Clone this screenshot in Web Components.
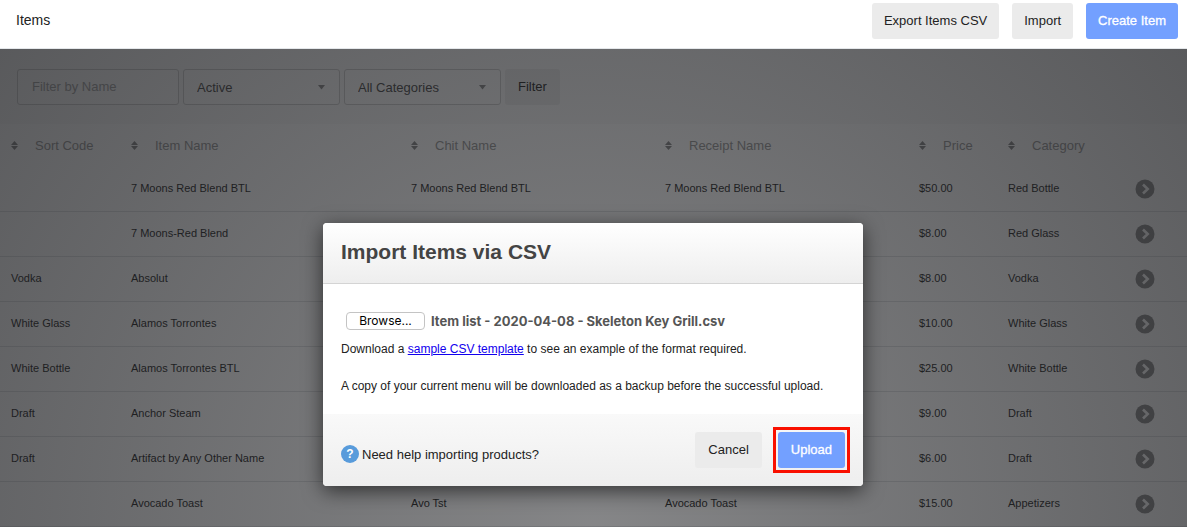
<!DOCTYPE html>
<html lang="en">
<head>
<meta charset="utf-8">
<meta name="viewport" content="width=device-width, initial-scale=1">
<title>Items</title>
<style>
    body {
        margin: 0;
        font-family: "Liberation Sans", Arial, sans-serif;
        font-size: 12px;
        color: #222;
        background: #fff;
    }
</style>
</head>
<body>
<items-page></items-page>

<script>
const ITEMS = [
    ['', '7 Moons Red Blend BTL', '7 Moons Red Blend BTL', '7 Moons Red Blend BTL', '$50.00', 'Red Bottle'],
    ['', '7 Moons-Red Blend', '', '', '$8.00', 'Red Glass'],
    ['Vodka', 'Absolut', '', '', '$8.00', 'Vodka'],
    ['White Glass', 'Alamos Torrontes', '', '', '$10.00', 'White Glass'],
    ['White Bottle', 'Alamos Torrontes BTL', '', '', '$25.00', 'White Bottle'],
    ['Draft', 'Anchor Steam', '', '', '$9.00', 'Draft'],
    ['Draft', 'Artifact by Any Other Name', '', '', '$6.00', 'Draft'],
    ['', 'Avocado Toast', 'Avo Tst', 'Avocado Toast', '$15.00', 'Appetizers'],
];

class AppButton extends HTMLElement {
    connectedCallback() {
        const shadowRoot = this.attachShadow({ mode: 'open' });
        shadowRoot.innerHTML = `
            <style>
                :host {
                    display: inline-block;
                }

                button {
                    display: block;
                    height: 36px;
                    padding: 0 var(--button-padding, 13px) 2px;
                    border: 0;
                    border-radius: 3px;
                    background: #ebebeb;
                    color: #222;
                    font: inherit;
                    font-size: 13px;
                    cursor: pointer;
                }

                :host([primary]) button {
                    background: #73a0ff;
                    color: #fff;
                    -webkit-text-stroke: 0.3px #fff;
                }
            </style>
            <button type="button"><slot></slot></button>
        `;
    }
}

class PageHeader extends HTMLElement {
    connectedCallback() {
        const shadowRoot = this.attachShadow({ mode: 'open' });
        shadowRoot.innerHTML = `
            <style>
                :host {
                    display: block;
                    border-bottom: 1px solid #e4e7ea;
                }

                header {
                    display: flex;
                    justify-content: space-between;
                    align-items: flex-start;
                    height: 48px;
                    padding: 3px 9px 0 16px;
                    box-sizing: border-box;
                }

                h1 {
                    margin: 0;
                    font-size: 14px;
                    font-weight: normal;
                    line-height: 34px;
                }

                .actions {
                    display: flex;
                    gap: 13px;
                    --button-padding: 12px;
                }
            </style>
            <header>
                <h1><slot></slot></h1>
                <div class="actions"><slot name="actions"></slot></div>
            </header>
        `;
    }
}

class SelectBox extends HTMLElement {
    connectedCallback() {
        const shadowRoot = this.attachShadow({ mode: 'open' });
        shadowRoot.innerHTML = `
            <style>
                :host {
                    display: block;
                    position: relative;
                    width: 157px;
                }

                select {
                    width: 100%;
                    height: 36px;
                    padding: 0 30px 0 13px;
                    border: 1px solid #ccc;
                    border-radius: 3px;
                    background: #fbfbfb;
                    color: #444;
                    font: inherit;
                    font-size: 13px;
                    appearance: none;
                }

                svg {
                    position: absolute;
                    right: 15px;
                    top: 16px;
                    pointer-events: none;
                }
            </style>
            <select aria-label="${this.getAttribute('label')}">
                <option>${this.getAttribute('value')}</option>
            </select>
            <svg width="7" height="5" viewBox="0 0 7 5"><path d="M0 0h7L3.5 4.6z" fill="#888"/></svg>
        `;
    }
}

class FilterBar extends HTMLElement {
    connectedCallback() {
        const shadowRoot = this.attachShadow({ mode: 'open' });
        shadowRoot.innerHTML = `
            <style>
                :host {
                    display: block;
                    background: #f9f9f9;
                }

                form {
                    display: flex;
                    gap: 4px;
                    padding: 20px 17px 19px;
                }

                input {
                    width: 162px;
                    height: 36px;
                    box-sizing: border-box;
                    padding: 0 14px 2px;
                    border: 1px solid #ccc;
                    border-radius: 3px;
                    background: #fbfbfb;
                    font: inherit;
                    font-size: 13px;
                }

                input::placeholder {
                    color: #a0a0a0;
                    opacity: 1;
                }
            </style>
            <form>
                <input type="text" placeholder="Filter by Name" aria-label="Filter by Name">
                <select-box label="Status" value="Active"></select-box>
                <select-box label="Category" value="All Categories"></select-box>
                <app-button>Filter</app-button>
            </form>
        `;
    }
}

class ItemsTable extends HTMLElement {
    connectedCallback() {
        const headings = ['Sort Code', 'Item Name', 'Chit Name', 'Receipt Name', 'Price', 'Category'];
        const shadowRoot = this.attachShadow({ mode: 'open' });
        shadowRoot.innerHTML = `
            <style>
                :host {
                    display: block;
                }

                table {
                    width: 100%;
                    table-layout: fixed;
                    border-collapse: separate;
                    border-spacing: 0;
                }

                .code { width: 120px; }
                .name { width: 280px; }
                .price { width: 89px; }
                .category { width: 127px; }
                .open { width: 63px; }

                th {
                    height: 43px;
                    padding: 0 0 0 11px;
                    text-align: left;
                    font-size: 13px;
                    font-weight: normal;
                    color: #959595;
                }

                th button {
                    display: flex;
                    align-items: center;
                    gap: 17px;
                    padding: 0;
                    border: 0;
                    background: none;
                    color: inherit;
                    font: inherit;
                    white-space: nowrap;
                }

                td {
                    height: 42px;
                    padding: 0 0 2px 11px;
                    border-bottom: 1px solid #dfe1e3;
                    font-size: 11px;
                    white-space: nowrap;
                }

                td:last-child {
                    height: 44px;
                    padding-bottom: 0;
                }

                td a {
                    display: block;
                    width: 20px;
                    height: 20px;
                }
            </style>
            <table>
                <colgroup>
                    <col class="code"><col class="name"><col><col>
                    <col class="price"><col class="category"><col class="open">
                </colgroup>
                <thead>
                    <tr>
                        ${headings.map(text => `
                            <th scope="col"><button type="button">
                                <svg width="7" height="9" viewBox="0 0 7 9"><path d="M0 4L3.5 0 7 4zM0 5h7L3.5 9z" fill="#858585"/></svg>
                                ${text}
                            </button></th>`).join('')}
                        <th></th>
                    </tr>
                </thead>
                <tbody>
                    ${ITEMS.map(item => `
                        <tr>
                            ${item.map(value => `<td>${value}</td>`).join('')}
                            <td><a href="#" aria-label="Open ${item[1]}">
                                <svg width="20" height="20" viewBox="0 0 20 20">
                                    <circle cx="10" cy="10" r="9.5" fill="#8a8a8a"/>
                                    <path d="M8 5.5L12.7 10 8 14.5" fill="none" stroke="#fff" stroke-width="2.6"/>
                                </svg>
                            </a></td>
                        </tr>`).join('')}
                </tbody>
            </table>
        `;
    }
}

class FilePicker extends HTMLElement {
    connectedCallback() {
        const shadowRoot = this.attachShadow({ mode: 'open' });
        shadowRoot.innerHTML = `
            <style>
                :host {
                    display: flex;
                    align-items: center;
                    gap: 6px;
                    font-family: Inter, sans-serif;
                }

                /* stays focusable, the label is what shows */
                input {
                    position: absolute;
                    width: 1px;
                    height: 1px;
                    opacity: 0;
                }

                label {
                    box-sizing: border-box;
                    width: 79px;
                    height: 18px;
                    border: 1px solid #c4c4c4;
                    border-radius: 4px;
                    background: #fff;
                    color: #000;
                    font-size: 12px;
                    line-height: 16px;
                    text-align: center;
                }

                output {
                    font-size: 13px;
                    font-weight: bold;
                    line-height: 18px;
                    color: #555;
                }
            </style>
            <input type="file" id="file" accept=".csv">
            <label for="file">Browse...</label>
            <output for="file">${this.getAttribute('filename')}</output>
        `;

        shadowRoot.querySelector('input').addEventListener('change', (event) => {
            const file = event.target.files[0];
            if (file) shadowRoot.querySelector('output').textContent = file.name;
        });
    }
}

class ModalDialog extends HTMLElement {
    connectedCallback() {
        const shadowRoot = this.attachShadow({ mode: 'open' });
        shadowRoot.innerHTML = `
            <style>
                :host {
                    display: flex;
                    justify-content: center;
                    align-items: flex-start;
                    position: absolute;
                    inset: 0;
                    padding: 174px 17px 0 16px;
                    background: radial-gradient(circle farthest-corner at 50% 100%, rgba(30, 31, 34, 0.54), rgba(30, 31, 34, 0.73));
                }

                section {
                    width: 100%;
                    max-width: 540px;
                    border-radius: 4px;
                    background: #fff;
                    box-shadow: 0 5px 20px rgba(0, 0, 0, 0.6);
                    overflow: hidden;
                }

                h2 {
                    margin: 0;
                    padding: 16px 18px 18px;
                    border-bottom: 1px solid #d4d4d4;
                    background: linear-gradient(#fff, #eee);
                    color: #444;
                    font-size: 21px;
                    line-height: 26px;
                }

                .body {
                    padding: 28px 18px 19px;
                }

                footer {
                    display: flex;
                    justify-content: space-between;
                    align-items: center;
                    padding: 18px;
                    background: linear-gradient(#f9f9f9, #eee);
                }
            </style>
            <section role="dialog" aria-labelledby="title">
                <h2 id="title"><slot name="title"></slot></h2>
                <div class="body"><slot></slot></div>
                <footer><slot name="footer"></slot></footer>
            </section>
        `;
    }
}

class ImportForm extends HTMLElement {
    connectedCallback() {
        const shadowRoot = this.attachShadow({ mode: 'open' });
        shadowRoot.innerHTML = `
            <style>
                :host {
                    display: contents;
                }

                file-picker {
                    padding-left: 5px;
                }

                p {
                    margin: 10px 0 0;
                    font-size: 12px;
                    line-height: 18px;
                }

                p + p {
                    margin-top: 19px;
                }

                p a {
                    color: #10e;
                }

                .help {
                    display: flex;
                    align-items: center;
                    gap: 3px;
                    padding-top: 8px;
                    color: inherit;
                    font-size: 13px;
                    text-decoration: none;
                }

                .badge {
                    width: 18px;
                    border-radius: 9px;
                    background: #589bdb;
                    color: #fff;
                    font-size: 12px;
                    font-weight: bold;
                    line-height: 18px;
                    text-align: center;
                }

                .buttons {
                    display: flex;
                    gap: 16px;
                }

                .highlight {
                    outline: 3px solid #f91000;
                    outline-offset: 2px;
                }
            </style>
            <modal-dialog>
                <span slot="title">Import Items via CSV</span>
                <file-picker filename="Item list - 2020-04-08 - Skeleton Key Grill.csv"></file-picker>
                <p>Download a <a href="#">sample CSV template</a> to see an example of the format required.</p>
                <p>A copy of your current menu will be downloaded as a backup before the successful upload.</p>
                <a class="help" slot="footer" href="#"><span class="badge">?</span>Need help importing products?</a>
                <div class="buttons" slot="footer">
                    <app-button>Cancel</app-button>
                    <app-button class="highlight" primary>Upload</app-button>
                </div>
            </modal-dialog>
        `;
    }
}

class ItemsPage extends HTMLElement {
    connectedCallback() {
        const shadowRoot = this.attachShadow({ mode: 'open' });
        shadowRoot.innerHTML = `
            <style>
                :host {
                    display: flex;
                    flex-direction: column;
                    min-height: 100vh;
                }

                main {
                    position: relative;
                    flex: 1;
                }
            </style>
            <page-header>
                Items
                <app-button slot="actions">Export Items CSV</app-button>
                <app-button slot="actions">Import</app-button>
                <app-button slot="actions" primary>Create Item</app-button>
            </page-header>
            <main>
                <filter-bar></filter-bar>
                <items-table></items-table>
                <import-form></import-form>
            </main>
        `;
    }
}

customElements.define('app-button', AppButton);
customElements.define('page-header', PageHeader);
customElements.define('select-box', SelectBox);
customElements.define('filter-bar', FilterBar);
customElements.define('items-table', ItemsTable);
customElements.define('file-picker', FilePicker);
customElements.define('modal-dialog', ModalDialog);
customElements.define('import-form', ImportForm);
customElements.define('items-page', ItemsPage);
</script>
</body>
</html>
